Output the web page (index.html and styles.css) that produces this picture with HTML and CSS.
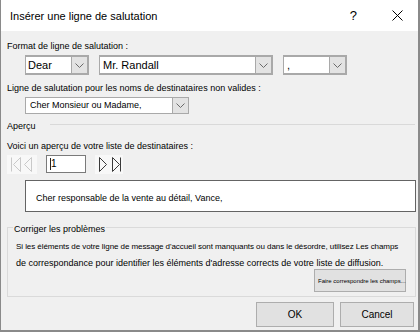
FILE: index.html
```html
<!DOCTYPE html>
<html lang="fr">
<head>
<meta charset="utf-8">
<title>Insérer une ligne de salutation</title>
<link rel="stylesheet" href="styles.css">
</head>
<body>
<div class="dialog">
  <div class="titlebar">
    <span class="title">Insérer une ligne de salutation</span>
    <span class="help">?</span>
    <svg class="close" width="11" height="11" viewBox="0 0 11 11"><path d="M0.5 0.5 L10.5 10.5 M10.5 0.5 L0.5 10.5" stroke="#000" stroke-width="1" fill="none"/></svg>
  </div>
  <div class="body">
    <div class="label l1">Format de ligne de salutation :</div>
    <div class="combos">
      <div class="combo c-dear"><span class="val">Dear</span><span class="drop"><svg width="9" height="5" viewBox="0 0 9 5"><path d="M0.5 0.5 L4.5 4.5 L8.5 0.5" stroke="#6a6a6a" fill="none"/></svg></span></div>
      <div class="combo c-name"><span class="val">Mr. Randall</span><span class="drop"><svg width="9" height="5" viewBox="0 0 9 5"><path d="M0.5 0.5 L4.5 4.5 L8.5 0.5" stroke="#6a6a6a" fill="none"/></svg></span></div>
      <div class="combo c-punct"><span class="val">,</span><span class="drop"><svg width="9" height="5" viewBox="0 0 9 5"><path d="M0.5 0.5 L4.5 4.5 L8.5 0.5" stroke="#6a6a6a" fill="none"/></svg></span></div>
    </div>
    <div class="label l2">Ligne de salutation pour les noms de destinataires non valides :</div>
    <div class="indent">
      <div class="combo c-invalid"><span class="val">Cher Monsieur ou Madame,</span><span class="drop"><svg width="9" height="5" viewBox="0 0 9 5"><path d="M0.5 0.5 L4.5 4.5 L8.5 0.5" stroke="#6a6a6a" fill="none"/></svg></span></div>
    </div>
    <div class="section"><span class="section-title">Aperçu</span><span class="sep"></span></div>
    <div class="label l3">Voici un aperçu de votre liste de destinataires :</div>
    <div class="nav">
      <div class="navgroup">
        <svg width="30" height="19" viewBox="0 0 30 19"><path d="M4.5 2.5 V16.5 M13.5 2.5 L6.5 9.5 L13.5 16.5 Z M24.5 2.5 L17.5 9.5 L24.5 16.5 Z" stroke="#c9c9c9" fill="none"/></svg>
      </div>
      <div class="recno"><span class="caret"></span>1</div>
      <div class="navgroup next">
        <svg width="28" height="19" viewBox="0 0 28 19"><path d="M4.5 2.5 L11.5 9.5 L4.5 16.5 Z M17.5 2.5 L24.5 9.5 L17.5 16.5 Z M25.5 2.5 V16.5" stroke="#3a3a3a" fill="none"/></svg>
      </div>
    </div>
    <div class="preview">Cher responsable de la vente au détail, Vance,</div>
    <div class="group">
      <div class="legend">Corriger les problèmes</div>
      <p class="g1">Si les éléments de votre ligne de message d'accueil sont manquants ou dans le désordre, utilisez Les champs</p>
      <p class="g2">de correspondance pour identifier les éléments d'adresse corrects de votre liste de diffusion.</p>
      <div class="fixrow"><button class="fixbtn">Faire correspondre les champs...</button></div>
    </div>
    <div class="actions">
      <button class="btn ok">OK</button>
      <button class="btn cancel">Cancel</button>
    </div>
  </div>
</div>
</body>
</html>
```
FILE: styles.css
```css
* { box-sizing: border-box; }
html, body { margin: 0; padding: 0; }
body { background: #f0f0f0; font-family: "Liberation Sans", Arial, sans-serif; color: #000; }

.dialog {
  width: 420px;
  height: 332px;
  background: #f0f0f0;
  border-left: 1px solid #8a8a8a;
  border-right: 2px solid #8a8a8a;
  border-bottom: 2px solid #8a8a8a;
  overflow: hidden;
}

.titlebar {
  height: 31px;
  background: #fff;
  display: flex;
  align-items: center;
  padding-left: 9px;
  padding-right: 15px;
}
.title { font-size: 11px; line-height: 14px; margin-top: 1px; }
.help { margin-left: auto; font-size: 13px; line-height: 14px; margin-right: 35px; margin-top: 1px; }
.close { display: block; }

.label {
  font-size: 9px;
  line-height: 11px;
  padding-left: 6px;
  white-space: nowrap;
}
.l1 { margin-top: 10px; }
.l2 { margin-top: 8px; }
.l3 { margin-top: 9px; }

.combos {
  display: flex;
  gap: 10px;
  margin-top: 3px;
  padding-left: 24px;
}
.combo {
  display: flex;
  height: 20px;
  background: #fff;
  border: 1px solid #a9a9a9;
  border-width: 2px 2px 2px 1px;
}
.combo .val {
  flex: 1;
  font-size: 11px;
  line-height: 16px;
  padding-left: 2px;
  white-space: nowrap;
  overflow: hidden;
}
.combo .drop {
  width: 16px;
  background: #e3e3e3;
  border-left: 1px solid #a9a9a9;
  display: flex;
  align-items: center;
  justify-content: center;
}
.c-dear { width: 64px; }
.c-name { width: 174px; }
.c-name .val { padding-left: 3px; }
.c-punct { width: 64px; }
.c-punct .val { padding-left: 3px; }

.indent { padding-left: 24px; margin-top: 3px; }
.c-invalid { width: 164px; height: 17px; border-width: 1px; }
.c-invalid .val { font-size: 9px; line-height: 15px; padding-left: 4px; }

.section {
  display: flex;
  align-items: flex-start;
  margin-top: 7px;
  padding-left: 6px;
  padding-right: 3px;
}
.section-title { font-size: 9px; line-height: 11px; }
.sep { flex: 1; height: 1px; background: #d9d9d9; margin-top: 3px; margin-left: 14px; }

.nav {
  display: flex;
  margin-top: 3px;
  padding-left: 6px;
  height: 19px;
}
.navgroup { width: 30px; height: 19px; background: #f8f8f8; }
.navgroup svg { display: block; }
.navgroup.next { width: 28px; margin-left: 9px; }
.recno {
  width: 40px;
  height: 18px;
  margin-left: 9px;
  background: #fff;
  border: 1px solid #7a7a7a;
  font-size: 10px;
  line-height: 16px;
  padding-left: 3px;
  display: flex;
  align-items: center;
}
.caret { width: 1px; height: 12px; background: #222; }

.preview {
  margin-top: 6px;
  margin-left: 24px;
  width: 391px;
  height: 32px;
  background: #fff;
  border: 1px solid #646464;
  font-size: 9px;
  line-height: 11px;
  padding: 12px 0 0 10px;
  white-space: nowrap;
}

.group {
  margin-top: 15px;
  margin-left: 6px;
  width: 409px;
  border: 1px solid #dadada;
  padding: 0 9px 4px 8px;
}
.legend {
  width: max-content;
  font-size: 9px;
  line-height: 11px;
  margin-top: -4px;
  margin-left: -3px;
  padding: 0 1px;
  background: #f0f0f0;
}
.g1, .g2 { margin: 0; white-space: nowrap; }
.g1 { font-size: 8px; line-height: 10px; margin-top: 7px; letter-spacing: -0.07px; }
.g2 { font-size: 9px; line-height: 11px; margin-top: 6px; }
.fixrow { display: flex; justify-content: flex-end; }
.fixbtn {
  width: 92px;
  height: 23px;
  margin: 0;
  padding: 0 0 0 3px;
  background: #e1e1e1;
  border: 1px solid #adadad;
  font-family: "Liberation Sans", Arial, sans-serif;
  font-size: 6px;
  text-align: left;
  color: #000;
  white-space: nowrap;
}

.actions {
  display: flex;
  justify-content: flex-end;
  gap: 6px;
  margin-top: 5px;
  padding-right: 4px;
}
.btn {
  height: 25px;
  margin: 0;
  padding: 0;
  background: #e1e1e1;
  border: 1px solid #adadad;
  font-family: "Liberation Sans", Arial, sans-serif;
  font-size: 10px;
  color: #000;
}
.ok { width: 78px; }
.cancel { width: 74px; }
```
